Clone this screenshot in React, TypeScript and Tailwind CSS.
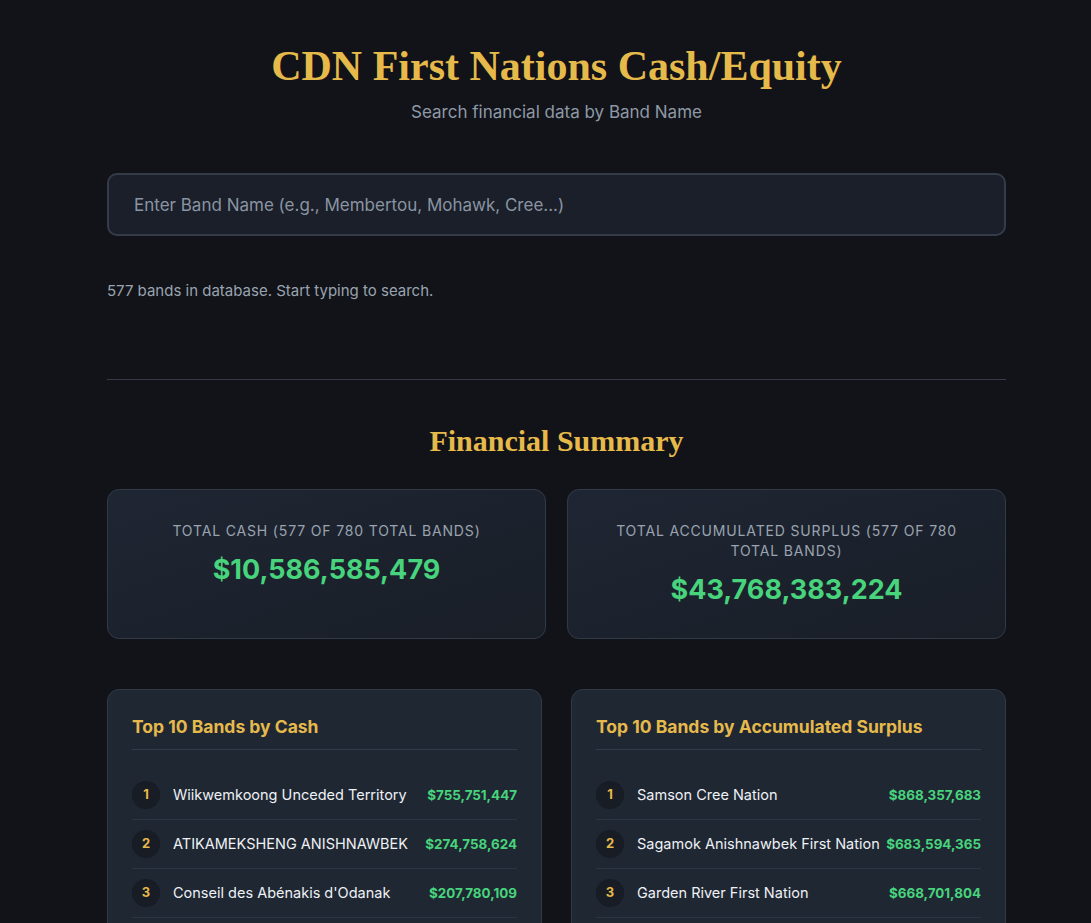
import React from 'react';

type Band = { rank: number; name: string; amount: string };

const TOP_CASH: Band[] = [
  { rank: 1, name: 'Wiikwemkoong Unceded Territory', amount: '$755,751,447' },
  { rank: 2, name: 'ATIKAMEKSHENG ANISHNAWBEK', amount: '$274,758,624' },
  { rank: 3, name: "Conseil des Abénakis d'Odanak", amount: '$207,780,109' },
];

const TOP_SURPLUS: Band[] = [
  { rank: 1, name: 'Samson Cree Nation', amount: '$868,357,683' },
  { rank: 2, name: 'Sagamok Anishnawbek First Nation', amount: '$683,594,365' },
  { rank: 3, name: 'Garden River First Nation', amount: '$668,701,804' },
];

const serif = { fontFamily: '"Liberation Serif", "DejaVu Serif", serif' };

const StatCard: React.FC<{ label: string; value: string }> = ({ label, value }) => (
  <div className="flex-1 h-[150px] rounded-xl border border-[#323a48] bg-gradient-to-br from-[#1f2633] to-[#191e27] px-8 pt-[31px] text-center">
    <p className="text-[14px] leading-[20px] uppercase tracking-[0.06em] text-[#9aa3b0]">{label}</p>
    <p className="mt-[13px] text-[27px] leading-[32px] font-bold text-[#47d47c]">{value}</p>
  </div>
);

const TopList: React.FC<{ title: string; items: Band[] }> = ({ title, items }) => (
  <div className="w-[435px] rounded-xl border border-[#323a48] bg-[#1f2733] px-6 pt-[26px] pb-6">
    <h3 className="text-[17.5px] leading-[22px] font-bold text-[#e6b94b] pb-[11px] border-b border-[#323b49]">{title}</h3>
    <ul className="mt-[21px]">
      {items.map(item => (
        <li key={item.rank} className="flex items-center h-[49px] border-b border-[#2d3543]">
          <span className="w-7 h-7 shrink-0 rounded-full bg-[#171c25] flex items-center justify-center text-[13px] font-bold text-[#e6b94b]">{item.rank}</span>
          <span className="ml-[13px] flex-1 min-w-0 whitespace-nowrap text-[14.5px] text-[#eef1f5]">{item.name}</span>
          <span className="shrink-0 text-[13.4px] font-bold text-[#47d47c]">{item.amount}</span>
        </li>
      ))}
    </ul>
  </div>
);

const App: React.FC = () => {
  return (
    <div className="min-h-screen bg-[#111318] pl-[22px]" style={{ fontFamily: 'Inter, "Noto Sans", sans-serif' }}>
      <div className="max-w-[899px] mx-auto pt-[40px] pb-10">
        <header className="text-center">
          <h1 className="text-[42px] leading-[52px] font-bold text-[#e6b94b]" style={serif}>CDN First Nations Cash/Equity</h1>
          <p className="mt-[8px] text-[17px] leading-[24px] text-[#8f99a6]">Search financial data by Band Name</p>
        </header>

        <div className="mt-[49px]">
          <input
            type="text"
            placeholder="Enter Band Name (e.g., Membertou, Mohawk, Cree...)"
            className="w-full h-[63px] rounded-[10px] border-2 border-[#343c4a] bg-[#1a1f29] px-[25px] text-[17px] text-white placeholder-[#8a94a2] outline-none"
          />
          <p className="mt-[44px] text-[15px] leading-[21px] text-[#9aa3b0]">577 bands in database. Start typing to search.</p>
        </div>

        <div className="mt-[78px] border-t border-[#363c47]" />

        <h2 className="mt-[42px] text-center text-[30px] leading-[38px] font-bold text-[#e6b94b]" style={serif}>Financial Summary</h2>

        <div className="mt-[29px] flex gap-[21px]">
          <StatCard label="Total Cash (577 of 780 total bands)" value="$10,586,585,479" />
          <StatCard label="Total Accumulated Surplus (577 of 780 total bands)" value="$43,768,383,224" />
        </div>

        <div className="mt-[50px] flex justify-between">
          <TopList title="Top 10 Bands by Cash" items={TOP_CASH} />
          <TopList title="Top 10 Bands by Accumulated Surplus" items={TOP_SURPLUS} />
        </div>
      </div>
    </div>
  );
};

export default App;
